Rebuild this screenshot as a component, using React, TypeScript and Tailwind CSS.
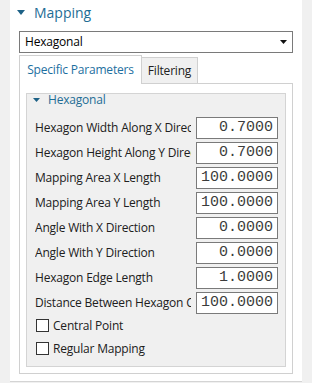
const rows = [
  ["Hexagon Width Along X Direction", "0.7000"],
  ["Hexagon Height Along Y Direction", "0.7000"],
  ["Mapping Area X Length", "100.0000"],
  ["Mapping Area Y Length", "100.0000"],
  ["Angle With X Direction", "0.0000"],
  ["Angle With Y Direction", "0.0000"],
  ["Hexagon Edge Length", "1.0000"],
  ["Distance Between Hexagon Centers", "100.0000"],
];

const checks = ["Central Point", "Regular Mapping"];

function Caret({ w = 8, h = 5, color = "#1d6186" }: { w?: number; h?: number; color?: string }) {
  return (
    <svg width={w} height={h} viewBox={`0 0 ${w} ${h}`}>
      <polygon points={`0,0 ${w},0 ${w / 2},${h}`} fill={color} />
    </svg>
  );
}

export default function App() {
  return (
    <div className="w-[312px] h-[383px] bg-[#f0f0f0] px-[10px] font-['Open_Sans',sans-serif] text-[12px] tracking-[-0.2px] text-[#202020]">
      <div className="h-[382px] bg-white border-b border-[#d4d4d4] flex flex-col">
        {/* section header */}
        <div className="h-[24px] flex items-center pl-[7px]">
          <Caret w={8} h={5} />
          <span className="ml-[9px] text-[14px] tracking-normal text-[#1e6d95]">Mapping</span>
        </div>

        {/* dropdown */}
        <div className="mt-[7px] mx-[9px] h-[22px] border border-[#7a7a7a] flex items-center justify-between pl-[5px] pr-[5px] text-black">
          <span>Hexagonal</span>
          <Caret w={7} h={4} color="#111" />
        </div>

        {/* tabs */}
        <div className="mt-[2px] mx-[9px] h-[28px] flex items-end">
          <div className="relative z-10 -mb-px h-[29px] w-[123px] bg-white border border-b-0 border-[#d0d0d0] flex items-center justify-center text-[#1c6fa0]">
            Specific Parameters
          </div>
          <div className="-ml-px h-[26px] w-[57px] bg-[#f0f0f0] border border-b-0 border-[#d0d0d0] flex items-center justify-center">
            Filtering
          </div>
        </div>

        {/* tab panel */}
        <div className="mx-[9px] h-[291px] border border-[#d0d0d0] bg-white pt-[9px] px-[6px]">
          <div className="h-[274px] border border-[#d4d4d4] bg-[#f0f0f0] pl-[8px] pr-[7px]">
            <div className="h-[11px] flex items-center -ml-[2px]">
              <Caret w={7} h={4} />
              <span className="ml-[8px] text-[#1e6d95]">Hexagonal</span>
            </div>
            <div className="mt-[12px] flex flex-col gap-[3px]">
              {rows.map(([label, value]) => (
                <div key={label} className="h-[22px] flex items-center">
                  <div className="flex-1 min-w-0 overflow-hidden whitespace-nowrap">{label}</div>
                  <div className="ml-[5px] w-[82px] h-[22px] border border-[#7a7a7a] bg-white flex items-center justify-end pr-[4px] font-['Liberation_Mono',monospace] text-[15px] tracking-normal text-[#3c3c3c]">
                    {value}
                  </div>
                </div>
              ))}
            </div>
            <div className="flex flex-col">
              {checks.map((c) => (
                <div key={c} className="h-[23px] flex items-center pl-[1px]">
                  <div className="w-[13px] h-[13px] border border-[#333] bg-white" />
                  <span className="ml-[4px]">{c}</span>
                </div>
              ))}
            </div>
          </div>
        </div>
      </div>
    </div>
  );
}
